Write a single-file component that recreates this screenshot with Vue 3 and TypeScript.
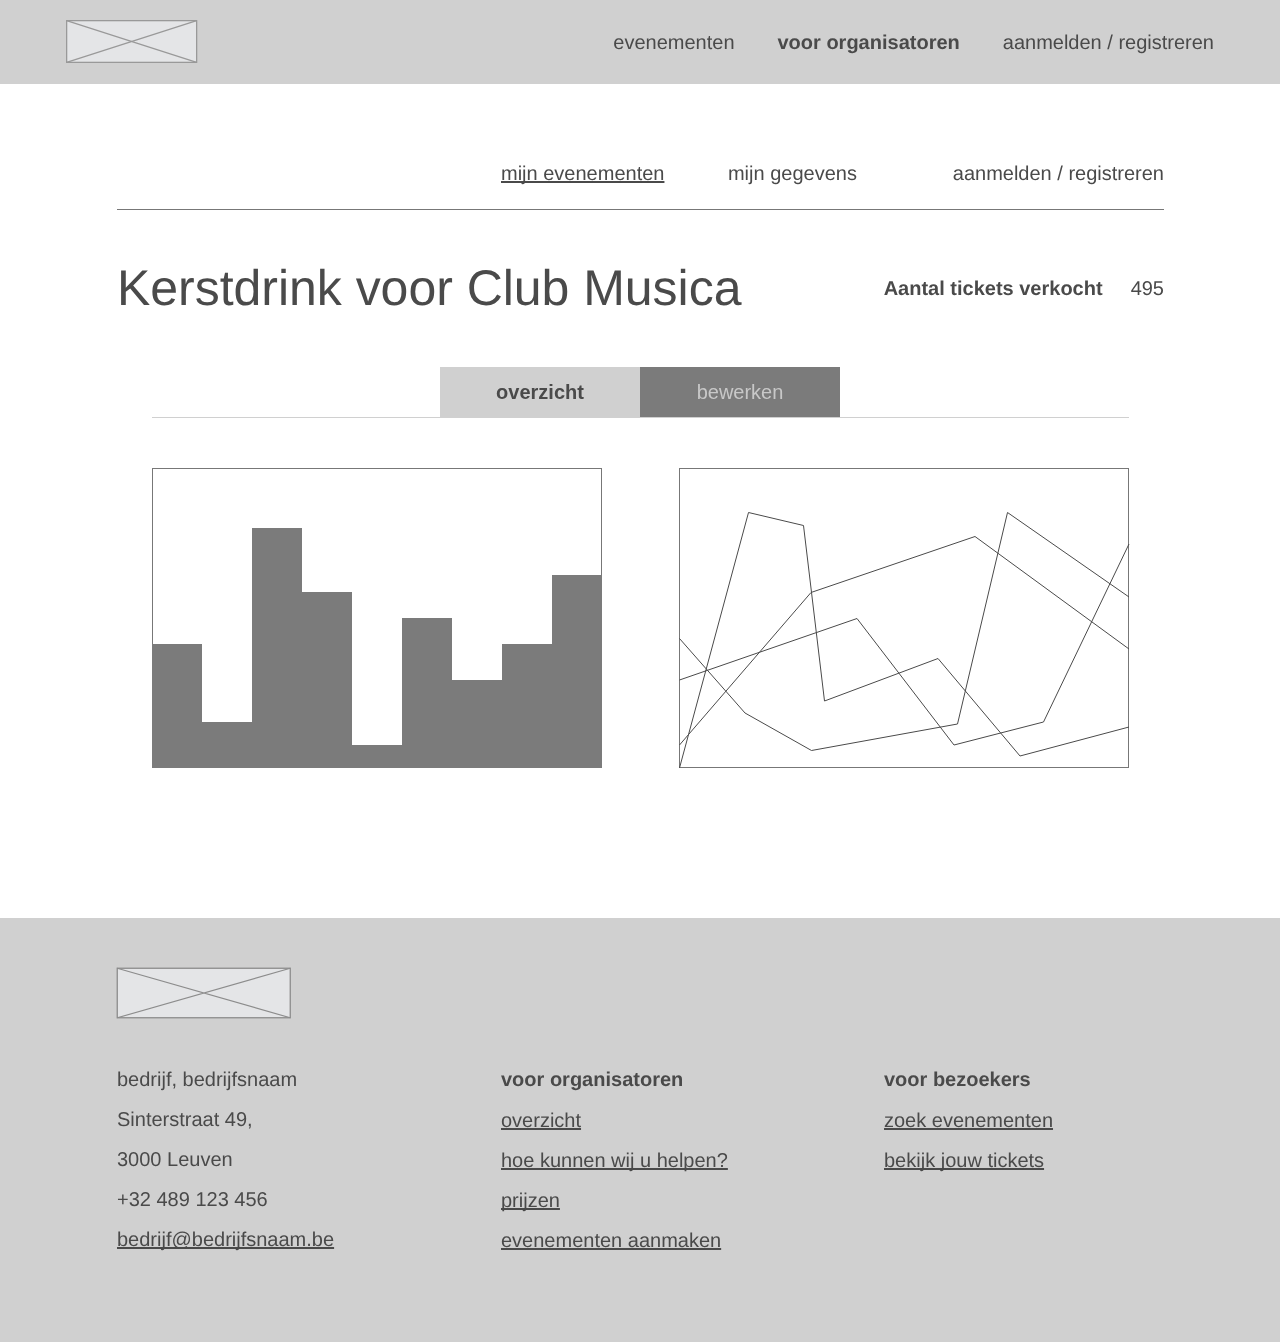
<script setup lang="ts">
const navItems = [
  { label: 'evenementen', active: false },
  { label: 'voor organisatoren', active: true },
  { label: 'aanmelden / registreren', active: false },
];

const barHeights = [124, 46, 240, 176, 23, 150, 88, 124, 193];

const lines = [
  '0.5,300 69.5,44.5 124.5,57.5 145.5,233 259,190.5 341,288 450,259',
  '0.5,277 132,124.5 296,68.5 450,181',
  '0.5,212 178,150.5 275,277 364.5,254 450,76',
  '0.5,170.5 66,245 132.5,282.5 278.5,256 328.5,44.5 450,129',
];

const organizerLinks = ['overzicht', 'hoe kunnen wij u helpen?', 'prijzen', 'evenementen aanmaken'];
const visitorLinks = ['zoek evenementen', 'bekijk jouw tickets'];
</script>

<template>
  <div class="page">
    <header class="topbar">
      <svg class="logo" width="133" height="44" viewBox="0 0 133 44">
        <rect x="1.65" y="0.65" width="130" height="41.7" fill="#e4e5e7" stroke="#999" stroke-width="1.3" />
        <path d="M1.65 0.65 131.65 42.35M131.65 0.65 1.65 42.35" fill="none" stroke="#999" stroke-width="1.2" />
      </svg>
      <nav class="topnav">
        <a v-for="item in navItems" :key="item.label" :class="{ active: item.active }">{{ item.label }}</a>
      </nav>
    </header>

    <main class="content">
      <div class="subnav">
        <a class="underline sub-first">mijn evenementen</a>
        <a class="sub-second">mijn gegevens</a>
        <a class="sub-third">aanmelden / registreren</a>
      </div>

      <div class="event-head">
        <h1>Kerstdrink voor Club Musica</h1>
        <div class="sold">
          <strong>Aantal tickets verkocht</strong>
          <span>495</span>
        </div>
      </div>

      <div class="panel">
        <div class="tabs">
          <button class="tab current">overzicht</button>
          <button class="tab">bewerken</button>
        </div>

        <div class="charts">
          <div class="bars">
            <div v-for="(h, i) in barHeights" :key="i" class="bar" :style="{ height: h + 'px' }"></div>
          </div>
          <svg class="lines" width="450" height="300" viewBox="0 0 450 300">
            <rect x="0.5" y="0.5" width="449" height="299" fill="none" stroke="#777" />
            <polyline v-for="(pts, i) in lines" :key="i" :points="pts" fill="none" stroke="#4a4a4a" stroke-width="1" />
          </svg>
        </div>
      </div>
    </main>

    <footer class="footer">
      <svg class="footer-logo" width="174" height="51" viewBox="0 0 174 51">
        <rect x="0.25" y="0.25" width="173" height="49.5" fill="#e4e5e7" stroke="#8c8c8c" stroke-width="1.3" />
        <path d="M0.25 0.25 173.25 49.75M173.25 0.25 0.25 49.75" fill="none" stroke="#8c8c8c" stroke-width="1.2" />
      </svg>
      <div class="footer-cols">
        <div class="col col-address">
          <p>bedrijf, bedrijfsnaam</p>
          <p>Sinterstraat 49,</p>
          <p>3000 Leuven</p>
          <p>+32 489 123 456</p>
          <p><a class="underline">bedrijf@bedrijfsnaam.be</a></p>
        </div>
        <div class="col links">
          <p class="col-title">voor organisatoren</p>
          <p v-for="link in organizerLinks" :key="link"><a class="underline">{{ link }}</a></p>
        </div>
        <div class="col links">
          <p class="col-title">voor bezoekers</p>
          <p v-for="link in visitorLinks" :key="link"><a class="underline">{{ link }}</a></p>
        </div>
      </div>
    </footer>
  </div>
</template>

<style scoped>
.page {
  width: 1280px;
  height: 1342px;
  display: flex;
  flex-direction: column;
  font-family: "Liberation Sans", Arial, sans-serif;
  font-size: 20px;
  color: #4a4a4a;
  text-rendering: geometricPrecision;
  will-change: transform;
}

.topbar {
  height: 84px;
  flex: none;
  display: flex;
  align-items: center;
  justify-content: space-between;
  padding: 0 66px 0 65px;
  background: #d0d0d0;
}

.logo {
  display: block;
  overflow: visible;
}

.topnav {
  display: flex;
  gap: 43px;
  padding-top: 2px;
}

.topnav .active {
  font-weight: bold;
}

.underline {
  text-decoration: underline;
  text-decoration-skip-ink: none;
}

.content {
  flex: 1;
  padding: 0 116px 0 117px;
}

.subnav {
  display: flex;
  height: 126px;
  padding-top: 78px;
  box-sizing: border-box;
  border-bottom: 1px solid #777;
  line-height: 24px;
}

.sub-first {
  margin-left: 384px;
}

.sub-second {
  margin-left: 63.5px;
}

.sub-third {
  margin-left: auto;
}

.event-head {
  display: flex;
  align-items: center;
  justify-content: space-between;
  margin-top: 47px;
  height: 62px;
}

h1 {
  margin: 0;
  font-size: 50px;
  font-weight: normal;
  line-height: 62px;
  letter-spacing: -0.03px;
}

.sold {
  display: flex;
  gap: 28px;
  padding-top: 2px;
}

.panel {
  margin: 48px 0 0 35px;
  width: 977px;
}

.tabs {
  display: flex;
  padding-left: 288px;
  border-bottom: 1px solid #d0d0d0;
}

.tab {
  width: 200px;
  height: 50px;
  padding: 0;
  border: 0;
  font: inherit;
  background: #7b7b7b;
  color: #c8c8c8;
}

.tab.current {
  background: #d0d0d0;
  color: #4a4a4a;
  font-weight: bold;
}

.charts {
  display: flex;
  justify-content: space-between;
  margin-top: 50px;
}

.bars {
  width: 450px;
  height: 300px;
  display: flex;
  align-items: flex-end;
  box-shadow: inset 0 0 0 1px #777;
}

.bar {
  width: 50px;
  background: #7b7b7b;
}

.lines {
  display: block;
  overflow: visible;
}

.footer {
  height: 424px;
  flex: none;
  box-sizing: border-box;
  padding: 50px 0 0 117px;
  background: #d0d0d0;
}

.footer-logo {
  display: block;
  overflow: visible;
}

.footer-cols {
  display: flex;
  margin-top: 41px;
}

.col {
  width: 383px;
}

.col-address {
  width: 384px;
}

.col p {
  margin: 0;
  line-height: 40px;
}

.links .col-title {
  font-weight: bold;
  margin-bottom: 1px;
}
</style>
